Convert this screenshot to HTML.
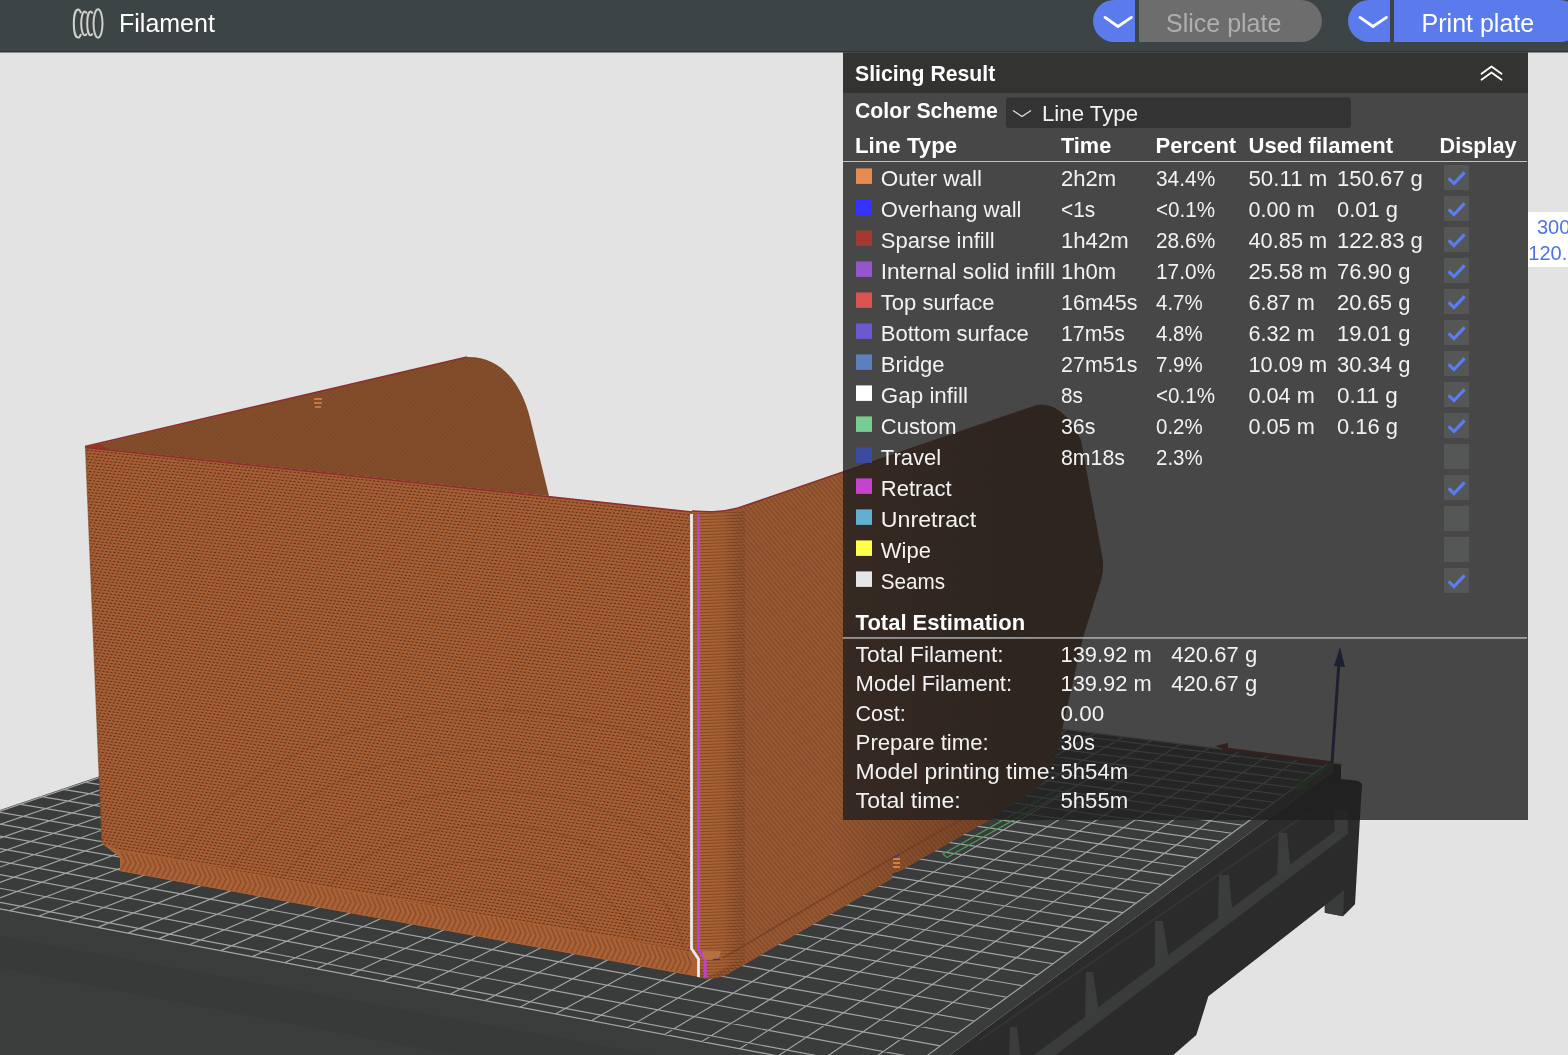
<!DOCTYPE html>
<html><head><meta charset="utf-8"><style>
html,body{margin:0;padding:0;}
body{width:1568px;height:1055px;overflow:hidden;background:#e3e3e3;position:relative;font-family:"Liberation Sans",sans-serif;}
svg{position:absolute;left:0;top:0;will-change:transform;}
.b{font-family:"Liberation Sans",sans-serif;font-weight:700;font-size:22px;fill:#fff;}
.r{font-family:"Liberation Sans",sans-serif;font-size:22px;fill:#f2f2f2;}
</style></head><body>
<svg width="1568" height="1055" viewBox="0 0 1568 1055">

<defs>
 <pattern id="fw" patternUnits="userSpaceOnUse" width="4" height="6" patternTransform="rotate(6)">
  <rect width="4" height="6" fill="#b46735"/>
  <rect x="0.4" y="0.6" width="2" height="1" fill="#5e3619" opacity="0.85"/>
  <rect x="2.4" y="3.6" width="2" height="1" fill="#5e3619" opacity="0.85"/>
 </pattern>
 <pattern id="iw" patternUnits="userSpaceOnUse" width="3" height="3" patternTransform="rotate(-38)">
  <rect width="3" height="3" fill="#854e2b"/>
  <rect x="0" y="0" width="3" height="0.9" fill="#6a3c1f" opacity="0.45"/>
 </pattern>
 <pattern id="rw" patternUnits="userSpaceOnUse" width="3" height="3" patternTransform="rotate(-20)">
  <rect width="3" height="3" fill="#9d5a2f"/>
  <rect x="0" y="0" width="3" height="0.8" fill="#6e3f20" opacity="0.35"/>
 </pattern>
 <pattern id="cw" patternUnits="userSpaceOnUse" width="6" height="3">
  <rect width="6" height="3" fill="#ad6436"/>
  <rect x="0" y="0" width="6" height="0.9" fill="#643a1c" opacity="0.5"/>
 </pattern>
 <linearGradient id="cornerg" x1="0" y1="0" x2="1" y2="0">
  <stop offset="0" stop-color="#000" stop-opacity="0"/>
  <stop offset="0.7" stop-color="#000" stop-opacity="0.05"/>
  <stop offset="1" stop-color="#000" stop-opacity="0.12"/>
 </linearGradient>
</defs>
<path d="M1342.3,764.3 L 1341,766 1341,779 1356,780.5 C1360,781 1362,783 1362,787 L1361,800 1355,904.2 1343,916.3 1324.8,912.7 1324.8,905.4 1208.4,996.3 1196.3,1035.1 1173.3,1055 914.1,1081.7 Z" fill="#2b2b2b"/>
<polygon points="-188.1,873.4 914.1,1081.7 914.1,1100 -188.1,1100" fill="#3b3d3c"/>
<polygon points="0,936 900,1100 900,1140 0,968" fill="#353736" opacity="0.4"/>
<line x1="1296.9" y1="820.6" x2="980" y2="1040" stroke="#333534" stroke-width="2"/>
<line x1="1362" y1="784" x2="1296.9" y2="820.6" stroke="#333534" stroke-width="2"/>
<polygon points="1334.5,831.5 1347.8,834 1055.7,1055 1034,1055" fill="#3a3c3b"/>
<polygon points="1334.5,810 1347.8,810 1347.8,834 1334.5,831.5" fill="#3a3c3b"/>
<polygon points="1278.7,832.7 1287,832.7 1291,875 1277,875" fill="#3b3d3c"/>
<polygon points="1219,875 1229,875 1233,919 1218,919" fill="#3b3d3c"/>
<polygon points="1155,921 1163,921 1170,967 1155,967" fill="#3b3d3c"/>
<polygon points="1086,972 1093,972 1100,1019 1085,1019" fill="#3b3d3c"/>
<polygon points="1010,1027 1017,1027 1021,1060 1009,1060" fill="#3b3d3c"/>
<polygon points="1324.8,905.4 1344.2,889.7 1343,916.3 1324.8,912.7" fill="#3a3c3b"/>
<polygon points="-188.1,873.4 914.1,1081.7 1342.3,764.3 463.1,653.5" fill="#3a3c3b"/>
<path d="M-185.4,873.9L465.3,653.8M-158.5,878.9L488.0,656.6M-131.3,884.1L510.9,659.5M-103.8,889.3L533.9,662.4M-76.0,894.5L557.2,665.4M-47.8,899.9L580.6,668.3M-19.4,905.2L604.3,671.3M9.4,910.7L628.1,674.3M38.5,916.2L652.2,677.3M68.0,921.8L676.5,680.4M97.8,927.4L700.9,683.5M128.0,933.1L725.6,686.6M158.5,938.9L750.5,689.7M189.4,944.7L775.6,692.9M220.7,950.6L801.0,696.1M252.3,956.6L826.5,699.3M284.4,962.7L852.3,702.6M316.8,968.8L878.3,705.8M349.6,975.0L904.6,709.2M382.9,981.3L931.1,712.5M416.6,987.6L957.8,715.9M450.6,994.1L984.8,719.3M485.2,1000.6L1012.0,722.7M520.1,1007.2L1039.5,726.2M555.5,1013.9L1067.2,729.7M591.4,1020.7L1095.2,733.2M627.7,1027.6L1123.4,736.7M664.6,1034.5L1151.9,740.3M701.9,1041.6L1180.7,744.0M739.7,1048.7L1209.7,747.6M778.0,1056.0L1239.0,751.3M816.8,1063.3L1268.6,755.0M856.1,1070.7L1298.5,758.8M896.0,1078.3L1328.7,762.6M453.8,656.6L1322.8,766.9M438.9,661.7L1313.5,773.7M423.8,666.8L1303.9,780.7M408.4,672.0L1294.2,787.8M392.8,677.2L1284.3,795.0M376.9,682.6L1274.2,802.4M360.8,688.0L1263.9,809.9M344.4,693.6L1253.4,817.5M327.7,699.2L1242.7,825.3M310.8,704.9L1231.8,833.3M293.6,710.7L1220.7,841.4M276.0,716.7L1209.3,849.7M258.2,722.7L1197.7,858.1M240.1,728.8L1185.9,866.8M221.6,735.0L1173.9,875.6M202.8,741.4L1161.6,884.5M183.7,747.8L1149.0,893.7M164.3,754.4L1136.2,903.1M144.5,761.1L1123.0,912.6M124.3,767.9L1109.6,922.4M103.8,774.8L1096.0,932.4M82.8,781.9L1082.0,942.6M61.5,789.1L1067.6,953.1M39.8,796.4L1053.0,963.7M17.7,803.9L1038.0,974.7M-4.9,811.5L1022.7,985.8M-27.9,819.3L1007.0,997.3M-51.4,827.2L991.0,1009.0M-75.3,835.3L974.5,1021.0M-99.7,843.5L957.6,1033.3M-124.6,851.9L940.4,1045.9M-150.0,860.5L922.7,1058.8M-175.9,869.3L904.5,1072.1M-188.1,873.4L914.1,1081.7M463.1,653.5L1342.3,764.3" stroke="#a3a5a4" stroke-width="1.15" fill="none"/>
<polygon points="1332.9,763.4 1341,766 1341,778 1334,781" fill="#262626"/>
<line x1="1222" y1="748.6" x2="1333" y2="763" stroke="#8a1e1e" stroke-width="3"/>
<polygon points="1215,746 1228,743 1228,751" fill="#8a1e1e"/>
<line x1="1333" y1="763" x2="1300" y2="786" stroke="#2e6a2a" stroke-width="3"/>
<polygon points="1294,791 1301,778 1308,788" fill="#2e6a2a"/>
<line x1="1332" y1="763" x2="1339" y2="662" stroke="#1c2070" stroke-width="3"/>
<polygon points="1334,666 1340,647 1345,667" fill="#1c2070"/>
<path d="M943,854 L1064,786 M947,857.5 L1068,789.5 M943,854 L947,857.5" stroke="#4a9a5a" stroke-width="1.3" fill="none"/>
<path d="M85,447 L467,357 C497,356 520,378 530,418 L549,496 L85,447 Z" fill="url(#iw)"/>
<path d="M85,446.5 L467,357" stroke="#8e2f2b" stroke-width="1.6" fill="none"/>
<path d="M85,447 L100,444 L110,450 Z" fill="#963229"/>
<clipPath id="wclip"><path d="M692,511 C705,512 720,513 738,508 L843,472 L1039,405 C1055,403 1072,418 1081,441 L1102,556 C1104,565 1103,572 1101,580 L1083,637 L1068,703 L1056,755 C1052,766 1047,776 1040,786 L989,820 L899.5,871 L892.6,873 L891.5,878.7 L726,975 C718,978 712,978.5 706,978.5 L698,977.5 L699,962 L693,949 Z"/></clipPath>
<path d="M692,511 C705,512 720,513 738,508 L843,472 L1039,405 C1055,403 1072,418 1081,441 L1102,556 C1104,565 1103,572 1101,580 L1083,637 L1068,703 L1056,755 C1052,766 1047,776 1040,786 L989,820 L899.5,871 L892.6,873 L891.5,878.7 L726,975 C718,978 712,978.5 706,978.5 L698,977.5 L699,962 L693,949 Z" fill="#985833"/>
<pattern id="wstripe" patternUnits="userSpaceOnUse" width="3.6" height="3.6" patternTransform="rotate(50)"><rect width="3.6" height="3.6" fill="#985833"/><rect width="3.6" height="1.3" fill="#6f3d1f" opacity="0.55"/></pattern>
<path d="M692,511 C705,512 720,513 738,508 L843,472 L1039,405 C1055,403 1072,418 1081,441 L1102,556 C1104,565 1103,572 1101,580 L1083,637 L1068,703 L1056,755 C1052,766 1047,776 1040,786 L989,820 L899.5,871 L892.6,873 L891.5,878.7 L726,975 C718,978 712,978.5 706,978.5 L698,977.5 L699,962 L693,949 Z" fill="url(#wstripe)"/>
<linearGradient id="wdark" x1="835" y1="0" x2="1010" y2="0" gradientUnits="userSpaceOnUse"><stop offset="0" stop-color="#1a0c04" stop-opacity="0"/><stop offset="1" stop-color="#1a0c04" stop-opacity="0.3"/></linearGradient>
<path d="M692,511 C705,512 720,513 738,508 L843,472 L1039,405 C1055,403 1072,418 1081,441 L1102,556 C1104,565 1103,572 1101,580 L1083,637 L1068,703 L1056,755 C1052,766 1047,776 1040,786 L989,820 L899.5,871 L892.6,873 L891.5,878.7 L726,975 C718,978 712,978.5 706,978.5 L698,977.5 L699,962 L693,949 Z" fill="url(#wdark)"/>
<linearGradient id="cg" x1="692" y1="0" x2="745" y2="0" gradientUnits="userSpaceOnUse"><stop offset="0" stop-color="#ad6436"/><stop offset="0.6" stop-color="#a86034"/><stop offset="1" stop-color="#925430" stop-opacity="0"/></linearGradient>
<path d="M692,511 C712,513 725,512 745,506 L745,958 L705,978 L699,962 L693,949 Z" fill="url(#cg)"/>
<g clip-path="url(#wclip)"><path d="M692,514.0 L745,512.0 M692,517.0 L745,515.0 M692,520.0 L745,518.0 M692,523.0 L745,521.0 M692,526.0 L745,524.0 M692,529.0 L745,527.0 M692,532.0 L745,530.0 M692,535.0 L745,533.0 M692,538.0 L745,536.0 M692,541.0 L745,539.0 M692,544.0 L745,542.0 M692,547.0 L745,545.0 M692,550.0 L745,548.0 M692,553.0 L745,551.0 M692,556.0 L745,554.0 M692,559.0 L745,557.0 M692,562.0 L745,560.0 M692,565.0 L745,563.0 M692,568.0 L745,566.0 M692,571.0 L745,569.0 M692,574.0 L745,572.0 M692,577.0 L745,575.0 M692,580.0 L745,578.0 M692,583.0 L745,581.0 M692,586.0 L745,584.0 M692,589.0 L745,587.0 M692,592.0 L745,590.0 M692,595.0 L745,593.0 M692,598.0 L745,596.0 M692,601.0 L745,599.0 M692,604.0 L745,602.0 M692,607.0 L745,605.0 M692,610.0 L745,608.0 M692,613.0 L745,611.0 M692,616.0 L745,614.0 M692,619.0 L745,617.0 M692,622.0 L745,620.0 M692,625.0 L745,623.0 M692,628.0 L745,626.0 M692,631.0 L745,629.0 M692,634.0 L745,632.0 M692,637.0 L745,635.0 M692,640.0 L745,638.0 M692,643.0 L745,641.0 M692,646.0 L745,644.0 M692,649.0 L745,647.0 M692,652.0 L745,650.0 M692,655.0 L745,653.0 M692,658.0 L745,656.0 M692,661.0 L745,659.0 M692,664.0 L745,662.0 M692,667.0 L745,665.0 M692,670.0 L745,668.0 M692,673.0 L745,671.0 M692,676.0 L745,674.0 M692,679.0 L745,677.0 M692,682.0 L745,680.0 M692,685.0 L745,683.0 M692,688.0 L745,686.0 M692,691.0 L745,689.0 M692,694.0 L745,692.0 M692,697.0 L745,695.0 M692,700.0 L745,698.0 M692,703.0 L745,701.0 M692,706.0 L745,704.0 M692,709.0 L745,707.0 M692,712.0 L745,710.0 M692,715.0 L745,713.0 M692,718.0 L745,716.0 M692,721.0 L745,719.0 M692,724.0 L745,722.0 M692,727.0 L745,725.0 M692,730.0 L745,728.0 M692,733.0 L745,731.0 M692,736.0 L745,734.0 M692,739.0 L745,737.0 M692,742.0 L745,740.0 M692,745.0 L745,743.0 M692,748.0 L745,746.0 M692,751.0 L745,749.0 M692,754.0 L745,752.0 M692,757.0 L745,755.0 M692,760.0 L745,758.0 M692,763.0 L745,761.0 M692,766.0 L745,764.0 M692,769.0 L745,767.0 M692,772.0 L745,770.0 M692,775.0 L745,773.0 M692,778.0 L745,776.0 M692,781.0 L745,779.0 M692,784.0 L745,782.0 M692,787.0 L745,785.0 M692,790.0 L745,788.0 M692,793.0 L745,791.0 M692,796.0 L745,794.0 M692,799.0 L745,797.0 M692,802.0 L745,800.0 M692,805.0 L745,803.0 M692,808.0 L745,806.0 M692,811.0 L745,809.0 M692,814.0 L745,812.0 M692,817.0 L745,815.0 M692,820.0 L745,818.0 M692,823.0 L745,821.0 M692,826.0 L745,824.0 M692,829.0 L745,827.0 M692,832.0 L745,830.0 M692,835.0 L745,833.0 M692,838.0 L745,836.0 M692,841.0 L745,839.0 M692,844.0 L745,842.0 M692,847.0 L745,845.0 M692,850.0 L745,848.0 M692,853.0 L745,851.0 M692,856.0 L745,854.0 M692,859.0 L745,857.0 M692,862.0 L745,860.0 M692,865.0 L745,863.0 M692,868.0 L745,866.0 M692,871.0 L745,869.0 M692,874.0 L745,872.0 M692,877.0 L745,875.0 M692,880.0 L745,878.0 M692,883.0 L745,881.0 M692,886.0 L745,884.0 M692,889.0 L745,887.0 M692,892.0 L745,890.0 M692,895.0 L745,893.0 M692,898.0 L745,896.0 M692,901.0 L745,899.0 M692,904.0 L745,902.0 M692,907.0 L745,905.0 M692,910.0 L745,908.0 M692,913.0 L745,911.0 M692,916.0 L745,914.0 M692,919.0 L745,917.0 M692,922.0 L745,920.0 M692,925.0 L745,923.0 M692,928.0 L745,926.0 M692,931.0 L745,929.0 M692,934.0 L745,932.0 M692,937.0 L745,935.0 M692,940.0 L745,938.0 M692,943.0 L745,941.0 M692,946.0 L745,944.0 M692,949.0 L745,947.0 M692,952.0 L745,950.0 M692,955.0 L745,953.0 M692,958.0 L745,956.0 M692,961.0 L745,959.0 M692,964.0 L745,962.0 M692,967.0 L745,965.0 M692,970.0 L745,968.0 M692,973.0 L745,971.0 M692,976.0 L745,974.0 M692,979.0 L745,977.0" stroke="#5a3219" stroke-width="0.9" fill="none" opacity="0.55"/></g>
<path d="M723,958 L880,865 L1040,775" stroke="#6e3b1e" stroke-width="1.8" fill="none" opacity="0.6"/>
<path d="M692,511 C705,512 720,513 738,508 L843,472 L1039,405" stroke="#8e2f2b" stroke-width="1.6" fill="none"/>
<clipPath id="fwclip"><path d="M85.5,447 L692,512 L693,949 L699,962 L700,977 L120,871 L120,857 L102,843.6 Z"/></clipPath>
<path d="M85.5,447 L692,512 L693,949 L699,962 L700,977 L120,871 L120,857 L102,843.6 Z" fill="#a65d34"/>
<g clip-path="url(#fwclip)" stroke="#55301a" stroke-width="1.05" stroke-dasharray="2.3 1.7" fill="none" opacity="0.9"><path d="M80,446.41 L705,513.29" stroke-dashoffset="0.00"/><path d="M80,449.41 L705,516.55" stroke-dashoffset="1.37"/><path d="M80,452.41 L705,519.81" stroke-dashoffset="2.74"/><path d="M80,455.40 L705,523.06" stroke-dashoffset="0.11"/><path d="M80,458.40 L705,526.32" stroke-dashoffset="1.48"/><path d="M80,461.40 L705,529.58" stroke-dashoffset="2.85"/><path d="M80,464.40 L705,532.84" stroke-dashoffset="0.22"/><path d="M80,467.40 L705,536.10" stroke-dashoffset="1.59"/><path d="M80,470.39 L705,539.36" stroke-dashoffset="2.96"/><path d="M80,473.39 L705,542.62" stroke-dashoffset="0.33"/><path d="M80,476.39 L705,545.88" stroke-dashoffset="1.70"/><path d="M80,479.39 L705,549.14" stroke-dashoffset="3.07"/><path d="M80,482.38 L705,552.40" stroke-dashoffset="0.44"/><path d="M80,485.38 L705,555.66" stroke-dashoffset="1.81"/><path d="M80,488.38 L705,558.92" stroke-dashoffset="3.18"/><path d="M80,491.38 L705,562.18" stroke-dashoffset="0.55"/><path d="M80,494.37 L705,565.44" stroke-dashoffset="1.92"/><path d="M80,497.37 L705,568.70" stroke-dashoffset="3.29"/><path d="M80,500.37 L705,571.96" stroke-dashoffset="0.66"/><path d="M80,503.37 L705,575.22" stroke-dashoffset="2.03"/><path d="M80,506.37 L705,578.48" stroke-dashoffset="3.40"/><path d="M80,509.36 L705,581.74" stroke-dashoffset="0.77"/><path d="M80,512.36 L705,585.00" stroke-dashoffset="2.14"/><path d="M80,515.36 L705,588.25" stroke-dashoffset="3.51"/><path d="M80,518.36 L705,591.51" stroke-dashoffset="0.88"/><path d="M80,521.35 L705,594.77" stroke-dashoffset="2.25"/><path d="M80,524.35 L705,598.03" stroke-dashoffset="3.62"/><path d="M80,527.35 L705,601.29" stroke-dashoffset="0.99"/><path d="M80,530.35 L705,604.55" stroke-dashoffset="2.36"/><path d="M80,533.34 L705,607.81" stroke-dashoffset="3.73"/><path d="M80,536.34 L705,611.07" stroke-dashoffset="1.10"/><path d="M80,539.34 L705,614.33" stroke-dashoffset="2.47"/><path d="M80,542.34 L705,617.59" stroke-dashoffset="3.84"/><path d="M80,545.34 L705,620.85" stroke-dashoffset="1.21"/><path d="M80,548.33 L705,624.11" stroke-dashoffset="2.58"/><path d="M80,551.33 L705,627.37" stroke-dashoffset="3.95"/><path d="M80,554.33 L705,630.63" stroke-dashoffset="1.32"/><path d="M80,557.33 L705,633.89" stroke-dashoffset="2.69"/><path d="M80,560.32 L705,637.15" stroke-dashoffset="0.06"/><path d="M80,563.32 L705,640.41" stroke-dashoffset="1.43"/><path d="M80,566.32 L705,643.67" stroke-dashoffset="2.80"/><path d="M80,569.32 L705,646.93" stroke-dashoffset="0.17"/><path d="M80,572.31 L705,650.19" stroke-dashoffset="1.54"/><path d="M80,575.31 L705,653.44" stroke-dashoffset="2.91"/><path d="M80,578.31 L705,656.70" stroke-dashoffset="0.28"/><path d="M80,581.31 L705,659.96" stroke-dashoffset="1.65"/><path d="M80,584.31 L705,663.22" stroke-dashoffset="3.02"/><path d="M80,587.30 L705,666.48" stroke-dashoffset="0.39"/><path d="M80,590.30 L705,669.74" stroke-dashoffset="1.76"/><path d="M80,593.30 L705,673.00" stroke-dashoffset="3.13"/><path d="M80,596.30 L705,676.26" stroke-dashoffset="0.50"/><path d="M80,599.29 L705,679.52" stroke-dashoffset="1.87"/><path d="M80,602.29 L705,682.78" stroke-dashoffset="3.24"/><path d="M80,605.29 L705,686.04" stroke-dashoffset="0.61"/><path d="M80,608.29 L705,689.30" stroke-dashoffset="1.98"/><path d="M80,611.28 L705,692.56" stroke-dashoffset="3.35"/><path d="M80,614.28 L705,695.82" stroke-dashoffset="0.72"/><path d="M80,617.28 L705,699.08" stroke-dashoffset="2.09"/><path d="M80,620.28 L705,702.34" stroke-dashoffset="3.46"/><path d="M80,623.28 L705,705.60" stroke-dashoffset="0.83"/><path d="M80,626.27 L705,708.86" stroke-dashoffset="2.20"/><path d="M80,629.27 L705,712.12" stroke-dashoffset="3.57"/><path d="M80,632.27 L705,715.37" stroke-dashoffset="0.94"/><path d="M80,635.27 L705,718.63" stroke-dashoffset="2.31"/><path d="M80,638.26 L705,721.89" stroke-dashoffset="3.68"/><path d="M80,641.26 L705,725.15" stroke-dashoffset="1.05"/><path d="M80,644.26 L705,728.41" stroke-dashoffset="2.42"/><path d="M80,647.26 L705,731.67" stroke-dashoffset="3.79"/><path d="M80,650.25 L705,734.93" stroke-dashoffset="1.16"/><path d="M80,653.25 L705,738.19" stroke-dashoffset="2.53"/><path d="M80,656.25 L705,741.45" stroke-dashoffset="3.90"/><path d="M80,659.25 L705,744.71" stroke-dashoffset="1.27"/><path d="M80,662.25 L705,747.97" stroke-dashoffset="2.64"/><path d="M80,665.24 L705,751.23" stroke-dashoffset="0.01"/><path d="M80,668.24 L705,754.49" stroke-dashoffset="1.38"/><path d="M80,671.24 L705,757.75" stroke-dashoffset="2.75"/><path d="M80,674.24 L705,761.01" stroke-dashoffset="0.12"/><path d="M80,677.23 L705,764.27" stroke-dashoffset="1.49"/><path d="M80,680.23 L705,767.53" stroke-dashoffset="2.86"/><path d="M80,683.23 L705,770.79" stroke-dashoffset="0.23"/><path d="M80,686.23 L705,774.05" stroke-dashoffset="1.60"/><path d="M80,689.22 L705,777.31" stroke-dashoffset="2.97"/><path d="M80,692.22 L705,780.56" stroke-dashoffset="0.34"/><path d="M80,695.22 L705,783.82" stroke-dashoffset="1.71"/><path d="M80,698.22 L705,787.08" stroke-dashoffset="3.08"/><path d="M80,701.22 L705,790.34" stroke-dashoffset="0.45"/><path d="M80,704.21 L705,793.60" stroke-dashoffset="1.82"/><path d="M80,707.21 L705,796.86" stroke-dashoffset="3.19"/><path d="M80,710.21 L705,800.12" stroke-dashoffset="0.56"/><path d="M80,713.21 L705,803.38" stroke-dashoffset="1.93"/><path d="M80,716.20 L705,806.64" stroke-dashoffset="3.30"/><path d="M80,719.20 L705,809.90" stroke-dashoffset="0.67"/><path d="M80,722.20 L705,813.16" stroke-dashoffset="2.04"/><path d="M80,725.20 L705,816.42" stroke-dashoffset="3.41"/><path d="M80,728.19 L705,819.68" stroke-dashoffset="0.78"/><path d="M80,731.19 L705,822.94" stroke-dashoffset="2.15"/><path d="M80,734.19 L705,826.20" stroke-dashoffset="3.52"/><path d="M80,737.19 L705,829.46" stroke-dashoffset="0.89"/><path d="M80,740.19 L705,832.72" stroke-dashoffset="2.26"/><path d="M80,743.18 L705,835.98" stroke-dashoffset="3.63"/><path d="M80,746.18 L705,839.24" stroke-dashoffset="1.00"/><path d="M80,749.18 L705,842.49" stroke-dashoffset="2.37"/><path d="M80,752.18 L705,845.75" stroke-dashoffset="3.74"/><path d="M80,755.17 L705,849.01" stroke-dashoffset="1.11"/><path d="M80,758.17 L705,852.27" stroke-dashoffset="2.48"/><path d="M80,761.17 L705,855.53" stroke-dashoffset="3.85"/><path d="M80,764.17 L705,858.79" stroke-dashoffset="1.22"/><path d="M80,767.16 L705,862.05" stroke-dashoffset="2.59"/><path d="M80,770.16 L705,865.31" stroke-dashoffset="3.96"/><path d="M80,773.16 L705,868.57" stroke-dashoffset="1.33"/><path d="M80,776.16 L705,871.83" stroke-dashoffset="2.70"/><path d="M80,779.16 L705,875.09" stroke-dashoffset="0.07"/><path d="M80,782.15 L705,878.35" stroke-dashoffset="1.44"/><path d="M80,785.15 L705,881.61" stroke-dashoffset="2.81"/><path d="M80,788.15 L705,884.87" stroke-dashoffset="0.18"/><path d="M80,791.15 L705,888.13" stroke-dashoffset="1.55"/><path d="M80,794.14 L705,891.39" stroke-dashoffset="2.92"/><path d="M80,797.14 L705,894.65" stroke-dashoffset="0.29"/><path d="M80,800.14 L705,897.91" stroke-dashoffset="1.66"/><path d="M80,803.14 L705,901.17" stroke-dashoffset="3.03"/><path d="M80,806.14 L705,904.43" stroke-dashoffset="0.40"/><path d="M80,809.13 L705,907.68" stroke-dashoffset="1.77"/><path d="M80,812.13 L705,910.94" stroke-dashoffset="3.14"/><path d="M80,815.13 L705,914.20" stroke-dashoffset="0.51"/><path d="M80,818.13 L705,917.46" stroke-dashoffset="1.88"/><path d="M80,821.12 L705,920.72" stroke-dashoffset="3.25"/><path d="M80,824.12 L705,923.98" stroke-dashoffset="0.62"/><path d="M80,827.12 L705,927.24" stroke-dashoffset="1.99"/><path d="M80,830.12 L705,930.50" stroke-dashoffset="3.36"/><path d="M80,833.11 L705,933.76" stroke-dashoffset="0.73"/><path d="M80,836.11 L705,937.02" stroke-dashoffset="2.10"/><path d="M80,839.11 L705,940.28" stroke-dashoffset="3.47"/><path d="M80,842.11 L705,943.54" stroke-dashoffset="0.84"/><path d="M80,845.11 L705,946.80" stroke-dashoffset="2.21"/><path d="M80,848.10 L705,950.06" stroke-dashoffset="3.58"/><path d="M80,851.10 L705,953.32" stroke-dashoffset="0.95"/><path d="M80,854.10 L705,956.58" stroke-dashoffset="2.32"/><path d="M80,857.10 L705,959.84" stroke-dashoffset="3.69"/><path d="M80,860.09 L705,963.10" stroke-dashoffset="1.06"/><path d="M80,863.09 L705,966.36" stroke-dashoffset="2.43"/><path d="M80,866.09 L705,969.61" stroke-dashoffset="3.80"/><path d="M80,869.09 L705,972.87" stroke-dashoffset="1.17"/><path d="M80,872.08 L705,976.13" stroke-dashoffset="2.54"/><path d="M80,875.08 L705,979.39" stroke-dashoffset="3.91"/><path d="M80,878.08 L705,982.65" stroke-dashoffset="1.28"/><path d="M80,881.08 L705,985.91" stroke-dashoffset="2.65"/><path d="M80,884.08 L705,989.17" stroke-dashoffset="0.02"/><path d="M80,887.07 L705,992.43" stroke-dashoffset="1.39"/><path d="M80,890.07 L705,995.69" stroke-dashoffset="2.76"/><path d="M80,893.07 L705,998.95" stroke-dashoffset="0.13"/><path d="M80,896.07 L705,1002.21" stroke-dashoffset="1.50"/><path d="M80,899.06 L705,1005.47" stroke-dashoffset="2.87"/><path d="M80,902.06 L705,1008.73" stroke-dashoffset="0.24"/><path d="M80,905.06 L705,1011.99" stroke-dashoffset="1.61"/><path d="M80,908.06 L705,1015.25" stroke-dashoffset="2.98"/><path d="M80,911.05 L705,1018.51" stroke-dashoffset="0.35"/><path d="M80,914.05 L705,1021.77" stroke-dashoffset="1.72"/><path d="M80,917.05 L705,1025.03" stroke-dashoffset="3.09"/><path d="M80,920.05 L705,1028.29" stroke-dashoffset="0.46"/><path d="M80,923.05 L705,1031.55" stroke-dashoffset="1.83"/><path d="M80,926.04 L705,1034.80" stroke-dashoffset="3.20"/><path d="M80,929.04 L705,1038.06" stroke-dashoffset="0.57"/><path d="M80,932.04 L705,1041.32" stroke-dashoffset="1.94"/><path d="M80,935.04 L705,1044.58" stroke-dashoffset="3.31"/><path d="M80,938.03 L705,1047.84" stroke-dashoffset="0.68"/><path d="M80,941.03 L705,1051.10" stroke-dashoffset="2.05"/><path d="M80,944.03 L705,1054.36" stroke-dashoffset="3.42"/><path d="M80,947.03 L705,1057.62" stroke-dashoffset="0.79"/><path d="M80,950.02 L705,1060.88" stroke-dashoffset="2.16"/><path d="M80,953.02 L705,1064.14" stroke-dashoffset="3.53"/><path d="M80,956.02 L705,1067.40" stroke-dashoffset="0.90"/><path d="M80,959.02 L705,1070.66" stroke-dashoffset="2.27"/><path d="M80,962.02 L705,1073.92" stroke-dashoffset="3.64"/><path d="M80,965.01 L705,1077.18" stroke-dashoffset="1.01"/><path d="M80,968.01 L705,1080.44" stroke-dashoffset="2.38"/><path d="M80,971.01 L705,1083.70" stroke-dashoffset="3.75"/><path d="M80,974.01 L705,1086.96" stroke-dashoffset="1.12"/><path d="M80,977.00 L705,1090.22" stroke-dashoffset="2.49"/><path d="M80,980.00 L705,1093.48" stroke-dashoffset="3.86"/><path d="M80,983.00 L705,1096.73" stroke-dashoffset="1.23"/></g>
<g clip-path="url(#fwclip)" fill="none" stroke="#4a2812" stroke-width="2.2" opacity="0.10"><ellipse cx="490" cy="965" rx="70" ry="45"/><ellipse cx="490" cy="965" rx="110" ry="75"/><ellipse cx="490" cy="965" rx="150" ry="105"/><ellipse cx="490" cy="965" rx="195" ry="140"/><ellipse cx="490" cy="965" rx="240" ry="175"/><ellipse cx="490" cy="965" rx="290" ry="215"/><ellipse cx="490" cy="965" rx="345" ry="255"/></g>
<path d="M102,843.6 L120,850 L693,952 L699,962 L700,977 L120,871 L120,857 Z" fill="#ab6136"/>
<path d="M121.0,851.2L126.0,861.6L121.0,870.2M126.0,852.1L131.0,862.5L126.0,871.1M131.0,853.0L136.0,863.4L131.0,872.0M136.0,853.8L141.0,864.3L136.0,872.9M141.0,854.7L146.0,865.2L141.0,873.8M146.0,855.6L151.0,866.1L146.0,874.8M151.0,856.5L156.0,867.0L151.0,875.7M156.0,857.4L161.0,867.9L156.0,876.6M161.0,858.3L166.0,868.8L161.0,877.5M166.0,859.2L171.0,869.7L166.0,878.4M171.0,860.1L176.0,870.6L171.0,879.3M176.0,861.0L181.0,871.5L176.0,880.2M181.0,861.9L186.0,872.4L181.0,881.1M186.0,862.7L191.0,873.3L186.0,882.1M191.0,863.6L196.0,874.2L191.0,883.0M196.0,864.5L201.0,875.1L196.0,883.9M201.0,865.4L206.0,876.0L201.0,884.8M206.0,866.3L211.0,876.9L206.0,885.7M211.0,867.2L216.0,877.8L211.0,886.6M216.0,868.1L221.0,878.7L216.0,887.5M221.0,869.0L226.0,879.6L221.0,888.5M226.0,869.9L231.0,880.5L226.0,889.4M231.0,870.8L236.0,881.4L231.0,890.3M236.0,871.6L241.0,882.3L236.0,891.2M241.0,872.5L246.0,883.2L241.0,892.1M246.0,873.4L251.0,884.1L246.0,893.0M251.0,874.3L256.0,885.0L251.0,893.9M256.0,875.2L261.0,885.9L256.0,894.9M261.0,876.1L266.0,886.8L261.0,895.8M266.0,877.0L271.0,887.7L266.0,896.7M271.0,877.9L276.0,888.6L271.0,897.6M276.0,878.8L281.0,889.5L276.0,898.5M281.0,879.7L286.0,890.4L281.0,899.4M286.0,880.5L291.0,891.3L286.0,900.3M291.0,881.4L296.0,892.2L291.0,901.3M296.0,882.3L301.0,893.1L296.0,902.2M301.0,883.2L306.0,894.1L301.0,903.1M306.0,884.1L311.0,895.0L306.0,904.0M311.0,885.0L316.0,895.9L311.0,904.9M316.0,885.9L321.0,896.8L316.0,905.8M321.0,886.8L326.0,897.7L321.0,906.7M326.0,887.7L331.0,898.6L326.0,907.6M331.0,888.6L336.0,899.5L331.0,908.6M336.0,889.5L341.0,900.4L336.0,909.5M341.0,890.3L346.0,901.3L341.0,910.4M346.0,891.2L351.0,902.2L346.0,911.3M351.0,892.1L356.0,903.1L351.0,912.2M356.0,893.0L361.0,904.0L356.0,913.1M361.0,893.9L366.0,904.9L361.0,914.0M366.0,894.8L371.0,905.8L366.0,915.0M371.0,895.7L376.0,906.7L371.0,915.9M376.0,896.6L381.0,907.6L376.0,916.8M381.0,897.5L386.0,908.5L381.0,917.7M386.0,898.4L391.0,909.4L386.0,918.6M391.0,899.2L396.0,910.3L391.0,919.5M396.0,900.1L401.0,911.2L396.0,920.4M401.0,901.0L406.0,912.1L401.0,921.4M406.0,901.9L411.0,913.0L406.0,922.3M411.0,902.8L416.0,913.9L411.0,923.2M416.0,903.7L421.0,914.8L416.0,924.1M421.0,904.6L426.0,915.7L421.0,925.0M426.0,905.5L431.0,916.6L426.0,925.9M431.0,906.4L436.0,917.5L431.0,926.8M436.0,907.3L441.0,918.4L436.0,927.8M441.0,908.1L446.0,919.3L441.0,928.7M446.0,909.0L451.0,920.2L446.0,929.6M451.0,909.9L456.0,921.1L451.0,930.5M456.0,910.8L461.0,922.0L456.0,931.4M461.0,911.7L466.0,922.9L461.0,932.3M466.0,912.6L471.0,923.8L466.0,933.2M471.0,913.5L476.0,924.7L471.0,934.1M476.0,914.4L481.0,925.6L476.0,935.1M481.0,915.3L486.0,926.5L481.0,936.0M486.0,916.2L491.0,927.4L486.0,936.9M491.0,917.0L496.0,928.3L491.0,937.8M496.0,917.9L501.0,929.2L496.0,938.7M501.0,918.8L506.0,930.1L501.0,939.6M506.0,919.7L511.0,931.0L506.0,940.5M511.0,920.6L516.0,931.9L511.0,941.5M516.0,921.5L521.0,932.8L516.0,942.4M521.0,922.4L526.0,933.7L521.0,943.3M526.0,923.3L531.0,934.6L526.0,944.2M531.0,924.2L536.0,935.5L531.0,945.1M536.0,925.1L541.0,936.4L536.0,946.0M541.0,925.9L546.0,937.3L541.0,946.9M546.0,926.8L551.0,938.2L546.0,947.9M551.0,927.7L556.0,939.1L551.0,948.8M556.0,928.6L561.0,940.0L556.0,949.7M561.0,929.5L566.0,941.0L561.0,950.6M566.0,930.4L571.0,941.9L566.0,951.5M571.0,931.3L576.0,942.8L571.0,952.4M576.0,932.2L581.0,943.7L576.0,953.3M581.0,933.1L586.0,944.6L581.0,954.3M586.0,934.0L591.0,945.5L586.0,955.2M591.0,934.8L596.0,946.4L591.0,956.1M596.0,935.7L601.0,947.3L596.0,957.0M601.0,936.6L606.0,948.2L601.0,957.9M606.0,937.5L611.0,949.1L606.0,958.8M611.0,938.4L616.0,950.0L611.0,959.7M616.0,939.3L621.0,950.9L616.0,960.6M621.0,940.2L626.0,951.8L621.0,961.6M626.0,941.1L631.0,952.7L626.0,962.5M631.0,942.0L636.0,953.6L631.0,963.4M636.0,942.9L641.0,954.5L636.0,964.3M641.0,943.7L646.0,955.4L641.0,965.2M646.0,944.6L651.0,956.3L646.0,966.1M651.0,945.5L656.0,957.2L651.0,967.0M656.0,946.4L661.0,958.1L656.0,968.0M661.0,947.3L666.0,959.0L661.0,968.9M666.0,948.2L671.0,959.9L666.0,969.8M671.0,949.1L676.0,960.8L671.0,970.7M676.0,950.0L681.0,961.7L676.0,971.6M681.0,950.9L686.0,962.6L681.0,972.5M686.0,951.8L691.0,963.5L686.0,973.4" stroke="#5a3219" stroke-width="1.5" fill="none" opacity="0.4"/>
<path d="M85.5,447.5 L692,512" stroke="#8e2f2b" stroke-width="1.7" fill="none"/>
<path d="M85.5,447 L102,843.6" stroke="#7d4423" stroke-width="1.2" fill="none" opacity="0.6"/>
<path d="M691.5,514 L691.5,948.5 L698.5,959 L698.5,977" stroke="#ececec" stroke-width="2.8" fill="none"/>
<path d="M698.6,514 L698.6,949 L705.2,960 L705.2,977.5" stroke="#bf40d8" stroke-width="2.8" fill="none"/>
<path d="M702,951 L721,951 L719,958.5 C715,960 708,960 704,959 Z" fill="#bd7443" opacity="0.8"/>
<line x1="713" y1="959.6" x2="720" y2="959.2" stroke="#2a2ac8" stroke-width="1.2"/>
<g fill="#c27a45"><rect x="314" y="398" width="8" height="2"/><rect x="314" y="402" width="8" height="2"/><rect x="315" y="406" width="6" height="2"/></g>
<g fill="#d08040"><rect x="893" y="858" width="7" height="2"/><rect x="893" y="862" width="7" height="2"/><rect x="893" y="866" width="7" height="2"/></g><line x1="893" y1="858" x2="899" y2="855" stroke="#3030c0" stroke-width="1.2"/>
</svg>
<svg width="1568" height="1055" viewBox="0 0 1568 1055">
<rect x="0" y="0" width="1568" height="52" fill="#3d4446"/>
<rect x="0" y="51" width="1568" height="1.5" fill="#2f3436"/>
<g fill="none" stroke="#cfcfcb" stroke-width="2.0">
<path d="M81,13.3 C80.2,10.5 79.3,9.4 78.2,9.4 C75.6,9.4 73.8,15.5 73.8,23.5 C73.8,31.5 75.6,37.6 78.2,37.6 C79.3,37.6 80.2,36.5 81,33.9"/>
<path d="M86.8,13.6 C86.2,12.1 85.6,11.5 84.9,11.5 C82.8,11.5 81.2,16.9 81.2,23.4 C81.2,29.9 82.8,35.3 84.9,35.3 C85.6,35.3 86.2,34.8 86.8,33.4"/>
<path d="M92.6,13.6 C92.0,12.1 91.4,11.5 90.7,11.5 C88.7,11.5 87.2,16.9 87.2,23.4 C87.2,29.9 88.7,35.3 90.7,35.3 C91.4,35.3 92.0,34.8 92.6,33.4"/>
<ellipse cx="98" cy="23.5" rx="4.5" ry="14.2"/>
</g>
<text x="119" y="32" style="font-family:'Liberation Sans';font-size:25px;fill:#fff">Filament</text>
<path d="M1114,0 L1135,0 L1135,42 L1114,42 A21,21 0 0 1 1114,0 Z" fill="#5b7bec"/>
<path d="M1105,17.4 L1118,26.5 L1131.4,17.4" stroke="#fff" stroke-width="2.8" fill="none" stroke-linecap="round" stroke-linejoin="round"/>
<path d="M1139,0 L1301,0 A21,21 0 0 1 1301,42 L1139,42 Z" fill="#6c6d6c"/>
<text x="1166" y="31.5" style="font-family:'Liberation Sans';font-size:25px;fill:#aeb0ae">Slice plate</text>
<path d="M1369,0 L1390,0 L1390,42 L1369,42 A21,21 0 0 1 1369,0 Z" fill="#5b7bec"/>
<path d="M1360,17.4 L1373,26.5 L1386.4,17.4" stroke="#fff" stroke-width="2.8" fill="none" stroke-linecap="round" stroke-linejoin="round"/>
<path d="M1394,0 L1560,0 A21,21 0 0 1 1560,42 L1394,42 Z" fill="#5b7bec"/>
<text x="1421.6" y="31.5" style="font-family:'Liberation Sans';font-size:25px;fill:#fff">Print plate</text>
<rect x="843" y="52.5" width="685" height="767.5" fill="#1f1f1f" fill-opacity="0.8"/>
<rect x="843" y="52.5" width="685" height="40.5" fill="#333331"/>
<path d="M1481.5,73.8 L1491.5,66.5 L1501.5,73.8 M1481.5,79.8 L1491.5,72.5 L1501.5,79.8" stroke="#fff" stroke-width="1.8" fill="none" stroke-linecap="round" stroke-linejoin="round"/>
<rect x="1006" y="97.4" width="345" height="30.5" rx="3" fill="#202020" fill-opacity="0.5"/>
<path d="M1013,110.5 L1022,116.5 L1031,110.5" stroke="#e0e0e0" stroke-width="1.3" fill="none"/>
<rect x="843" y="161" width="684" height="1" fill="#c0c0c0"/>
<rect x="843" y="637.3" width="684" height="1.3" fill="#c0c0c0"/>
<text x="855" y="81" class="b" textLength="140.2" lengthAdjust="spacingAndGlyphs">Slicing Result</text>
<text x="855" y="118" class="b" textLength="142.9" lengthAdjust="spacingAndGlyphs">Color Scheme</text>
<text x="1042" y="121" class="r" textLength="96" lengthAdjust="spacingAndGlyphs">Line Type</text>
<text x="855" y="152.5" class="b" textLength="102.2" lengthAdjust="spacingAndGlyphs">Line Type</text>
<text x="1061" y="152.5" class="b" textLength="50.2" lengthAdjust="spacingAndGlyphs">Time</text>
<text x="1155.5" y="152.5" class="b" textLength="80.7" lengthAdjust="spacingAndGlyphs">Percent</text>
<text x="1248.5" y="152.5" class="b" textLength="144.7" lengthAdjust="spacingAndGlyphs">Used filament</text>
<text x="1439.5" y="152.5" class="b" textLength="77.2" lengthAdjust="spacingAndGlyphs">Display</text>
<rect x="856" y="168.4" width="16" height="15.5" fill="#e98b4f"/>
<text x="880.8" y="185.5" class="r" textLength="101.2" lengthAdjust="spacingAndGlyphs">Outer wall</text>
<text x="1061" y="185.5" class="r" textLength="55.2" lengthAdjust="spacingAndGlyphs">2h2m</text>
<text x="1156" y="185.5" class="r" textLength="59.2" lengthAdjust="spacingAndGlyphs">34.4%</text>
<text x="1248.5" y="185.5" class="r" textLength="78.7" lengthAdjust="spacingAndGlyphs">50.11 m</text>
<text x="1337" y="185.5" class="r" textLength="85.9" lengthAdjust="spacingAndGlyphs">150.67 g</text>
<rect x="1444" y="165" width="25" height="25" fill="#555756"/>
<path d="M1448.6,178.4 L1454,183.6 L1464.6,172.4" stroke="#5b7cf2" stroke-width="3.2" fill="none"/>
<rect x="856" y="199.4" width="16" height="15.5" fill="#3333ff"/>
<text x="880.8" y="216.5" class="r">Overhang wall</text>
<text x="1061" y="216.5" class="r" textLength="34.2" lengthAdjust="spacingAndGlyphs">&lt;1s</text>
<text x="1156" y="216.5" class="r" textLength="59.0" lengthAdjust="spacingAndGlyphs">&lt;0.1%</text>
<text x="1248.5" y="216.5" class="r" textLength="66.2" lengthAdjust="spacingAndGlyphs">0.00 m</text>
<text x="1337" y="216.5" class="r" textLength="60.9" lengthAdjust="spacingAndGlyphs">0.01 g</text>
<rect x="1444" y="196" width="25" height="25" fill="#555756"/>
<path d="M1448.6,209.4 L1454,214.6 L1464.6,203.4" stroke="#5b7cf2" stroke-width="3.2" fill="none"/>
<rect x="856" y="230.4" width="16" height="15.5" fill="#a0392f"/>
<text x="880.8" y="247.5" class="r">Sparse infill</text>
<text x="1061" y="247.5" class="r" textLength="67.7" lengthAdjust="spacingAndGlyphs">1h42m</text>
<text x="1156" y="247.5" class="r" textLength="59.2" lengthAdjust="spacingAndGlyphs">28.6%</text>
<text x="1248.5" y="247.5" class="r" textLength="78.7" lengthAdjust="spacingAndGlyphs">40.85 m</text>
<text x="1337" y="247.5" class="r" textLength="85.9" lengthAdjust="spacingAndGlyphs">122.83 g</text>
<rect x="1444" y="227" width="25" height="25" fill="#555756"/>
<path d="M1448.6,240.4 L1454,245.6 L1464.6,234.4" stroke="#5b7cf2" stroke-width="3.2" fill="none"/>
<rect x="856" y="261.4" width="16" height="15.5" fill="#9457cb"/>
<text x="880.8" y="278.5" class="r" textLength="174.2" lengthAdjust="spacingAndGlyphs">Internal solid infill</text>
<text x="1061" y="278.5" class="r" textLength="55.2" lengthAdjust="spacingAndGlyphs">1h0m</text>
<text x="1156" y="278.5" class="r" textLength="59.2" lengthAdjust="spacingAndGlyphs">17.0%</text>
<text x="1248.5" y="278.5" class="r" textLength="78.7" lengthAdjust="spacingAndGlyphs">25.58 m</text>
<text x="1337" y="278.5" class="r" textLength="73.4" lengthAdjust="spacingAndGlyphs">76.90 g</text>
<rect x="1444" y="258" width="25" height="25" fill="#555756"/>
<path d="M1448.6,271.4 L1454,276.6 L1464.6,265.4" stroke="#5b7cf2" stroke-width="3.2" fill="none"/>
<rect x="856" y="292.4" width="16" height="15.5" fill="#d9534f"/>
<text x="880.8" y="309.5" class="r">Top surface</text>
<text x="1061" y="309.5" class="r" textLength="76.4" lengthAdjust="spacingAndGlyphs">16m45s</text>
<text x="1156" y="309.5" class="r" textLength="46.7" lengthAdjust="spacingAndGlyphs">4.7%</text>
<text x="1248.5" y="309.5" class="r" textLength="66.2" lengthAdjust="spacingAndGlyphs">6.87 m</text>
<text x="1337" y="309.5" class="r" textLength="73.4" lengthAdjust="spacingAndGlyphs">20.65 g</text>
<rect x="1444" y="289" width="25" height="25" fill="#555756"/>
<path d="M1448.6,302.4 L1454,307.6 L1464.6,296.4" stroke="#5b7cf2" stroke-width="3.2" fill="none"/>
<rect x="856" y="323.4" width="16" height="15.5" fill="#6a5acd"/>
<text x="880.8" y="340.5" class="r">Bottom surface</text>
<text x="1061" y="340.5" class="r" textLength="63.9" lengthAdjust="spacingAndGlyphs">17m5s</text>
<text x="1156" y="340.5" class="r" textLength="46.7" lengthAdjust="spacingAndGlyphs">4.8%</text>
<text x="1248.5" y="340.5" class="r" textLength="66.2" lengthAdjust="spacingAndGlyphs">6.32 m</text>
<text x="1337" y="340.5" class="r" textLength="73.4" lengthAdjust="spacingAndGlyphs">19.01 g</text>
<rect x="1444" y="320" width="25" height="25" fill="#555756"/>
<path d="M1448.6,333.4 L1454,338.6 L1464.6,327.4" stroke="#5b7cf2" stroke-width="3.2" fill="none"/>
<rect x="856" y="354.4" width="16" height="15.5" fill="#5b80bb"/>
<text x="880.8" y="371.5" class="r">Bridge</text>
<text x="1061" y="371.5" class="r" textLength="76.4" lengthAdjust="spacingAndGlyphs">27m51s</text>
<text x="1156" y="371.5" class="r" textLength="46.7" lengthAdjust="spacingAndGlyphs">7.9%</text>
<text x="1248.5" y="371.5" class="r" textLength="78.7" lengthAdjust="spacingAndGlyphs">10.09 m</text>
<text x="1337" y="371.5" class="r" textLength="73.4" lengthAdjust="spacingAndGlyphs">30.34 g</text>
<rect x="1444" y="351" width="25" height="25" fill="#555756"/>
<path d="M1448.6,364.4 L1454,369.6 L1464.6,358.4" stroke="#5b7cf2" stroke-width="3.2" fill="none"/>
<rect x="856" y="385.4" width="16" height="15.5" fill="#ffffff"/>
<text x="880.8" y="402.5" class="r" textLength="87.2" lengthAdjust="spacingAndGlyphs">Gap infill</text>
<text x="1061" y="402.5" class="r" textLength="21.9" lengthAdjust="spacingAndGlyphs">8s</text>
<text x="1156" y="402.5" class="r" textLength="59.0" lengthAdjust="spacingAndGlyphs">&lt;0.1%</text>
<text x="1248.5" y="402.5" class="r" textLength="66.2" lengthAdjust="spacingAndGlyphs">0.04 m</text>
<text x="1337" y="402.5" class="r" textLength="60.9" lengthAdjust="spacingAndGlyphs">0.11 g</text>
<rect x="1444" y="382" width="25" height="25" fill="#555756"/>
<path d="M1448.6,395.4 L1454,400.6 L1464.6,389.4" stroke="#5b7cf2" stroke-width="3.2" fill="none"/>
<rect x="856" y="416.4" width="16" height="15.5" fill="#78cc92"/>
<text x="880.8" y="433.5" class="r">Custom</text>
<text x="1061" y="433.5" class="r" textLength="34.4" lengthAdjust="spacingAndGlyphs">36s</text>
<text x="1156" y="433.5" class="r" textLength="46.7" lengthAdjust="spacingAndGlyphs">0.2%</text>
<text x="1248.5" y="433.5" class="r" textLength="66.2" lengthAdjust="spacingAndGlyphs">0.05 m</text>
<text x="1337" y="433.5" class="r" textLength="60.9" lengthAdjust="spacingAndGlyphs">0.16 g</text>
<rect x="1444" y="413" width="25" height="25" fill="#555756"/>
<path d="M1448.6,426.4 L1454,431.6 L1464.6,420.4" stroke="#5b7cf2" stroke-width="3.2" fill="none"/>
<rect x="856" y="447.4" width="16" height="15.5" fill="#3c4aa0"/>
<text x="880.8" y="464.5" class="r">Travel</text>
<text x="1061" y="464.5" class="r" textLength="63.9" lengthAdjust="spacingAndGlyphs">8m18s</text>
<text x="1156" y="464.5" class="r" textLength="46.7" lengthAdjust="spacingAndGlyphs">2.3%</text>
<rect x="1444" y="444" width="25" height="25" fill="#555756"/>
<rect x="856" y="478.4" width="16" height="15.5" fill="#c444cf"/>
<text x="880.8" y="495.5" class="r">Retract</text>
<rect x="1444" y="475" width="25" height="25" fill="#555756"/>
<path d="M1448.6,488.4 L1454,493.6 L1464.6,482.4" stroke="#5b7cf2" stroke-width="3.2" fill="none"/>
<rect x="856" y="509.4" width="16" height="15.5" fill="#64aed2"/>
<text x="880.8" y="526.5" class="r" textLength="95.3" lengthAdjust="spacingAndGlyphs">Unretract</text>
<rect x="1444" y="506" width="25" height="25" fill="#555756"/>
<rect x="856" y="540.4" width="16" height="15.5" fill="#ffff4d"/>
<text x="880.8" y="557.5" class="r">Wipe</text>
<rect x="1444" y="537" width="25" height="25" fill="#555756"/>
<rect x="856" y="571.4" width="16" height="15.5" fill="#e6e6e6"/>
<text x="880.8" y="588.5" class="r" textLength="64.4" lengthAdjust="spacingAndGlyphs">Seams</text>
<rect x="1444" y="568" width="25" height="25" fill="#555756"/>
<path d="M1448.6,581.4 L1454,586.6 L1464.6,575.4" stroke="#5b7cf2" stroke-width="3.2" fill="none"/>
<text x="855.6" y="629.5" class="b">Total Estimation</text>
<text x="855.6" y="662.3" class="r" textLength="148.0" lengthAdjust="spacingAndGlyphs">Total Filament:</text>
<text x="1060.5" y="662.3" class="r" textLength="91.2" lengthAdjust="spacingAndGlyphs">139.92 m</text>
<text x="1171.3" y="662.3" class="r" textLength="85.9" lengthAdjust="spacingAndGlyphs">420.67 g</text>
<text x="855.6" y="691.4" class="r">Model Filament:</text>
<text x="1060.5" y="691.4" class="r" textLength="91.2" lengthAdjust="spacingAndGlyphs">139.92 m</text>
<text x="1171.3" y="691.4" class="r" textLength="85.9" lengthAdjust="spacingAndGlyphs">420.67 g</text>
<text x="855.6" y="720.5" class="r" textLength="50.2" lengthAdjust="spacingAndGlyphs">Cost:</text>
<text x="1060.5" y="720.5" class="r" textLength="43.7" lengthAdjust="spacingAndGlyphs">0.00</text>
<text x="855.6" y="749.5" class="r" textLength="133.2" lengthAdjust="spacingAndGlyphs">Prepare time:</text>
<text x="1060.5" y="749.5" class="r" textLength="34.4" lengthAdjust="spacingAndGlyphs">30s</text>
<text x="855.6" y="778.6" class="r" textLength="200.2" lengthAdjust="spacingAndGlyphs">Model printing time:</text>
<text x="1060.5" y="778.6" class="r" textLength="67.7" lengthAdjust="spacingAndGlyphs">5h54m</text>
<text x="855.6" y="807.7" class="r" textLength="105.2" lengthAdjust="spacingAndGlyphs">Total time:</text>
<text x="1060.5" y="807.7" class="r" textLength="67.7" lengthAdjust="spacingAndGlyphs">5h55m</text>
<rect x="1528" y="212" width="40" height="55" fill="#ffffff"/>
<text x="1537" y="234.3" style="font-family:'Liberation Sans';font-size:20px;fill:#4f73e8">300.00</text>
<text x="1528.3" y="259.8" style="font-family:'Liberation Sans';font-size:20px;fill:#4f73e8">120.00</text>
</svg>
</body></html>
